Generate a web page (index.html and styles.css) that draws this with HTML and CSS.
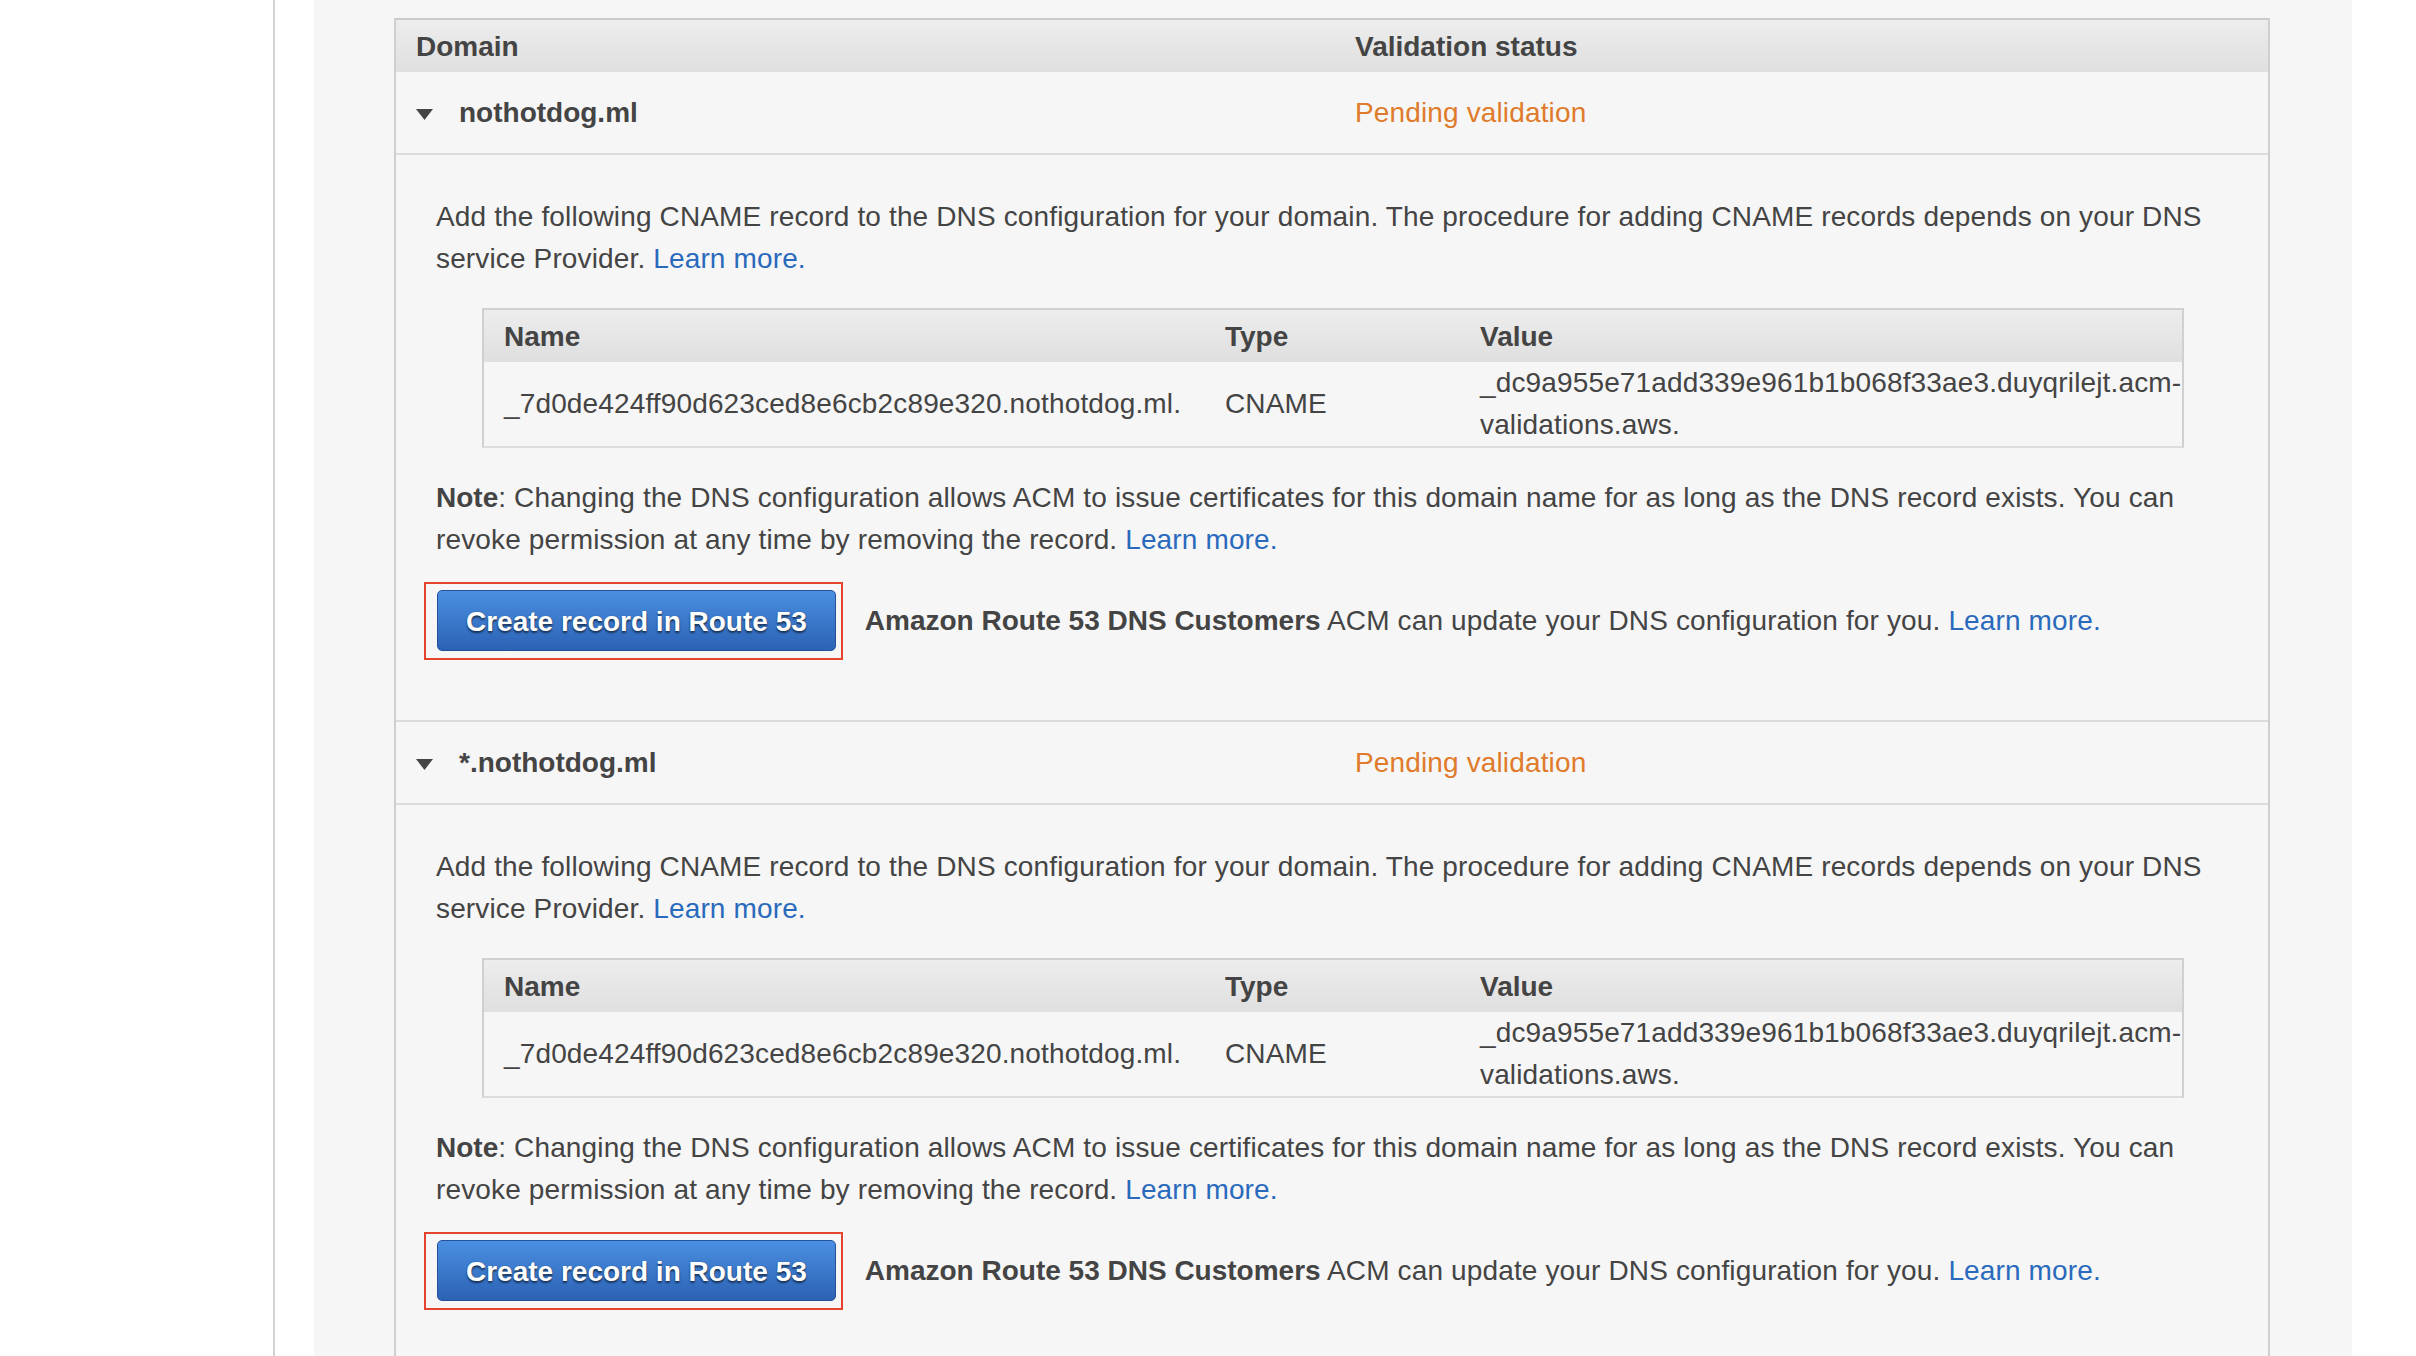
FILE: index.html
```html
<!DOCTYPE html>
<html lang="en">
<head>
<meta charset="utf-8">
<title>Validation</title>
<link rel="stylesheet" href="styles.css">
</head>
<body>
<div class="page">
  <aside class="sidebar"></aside>
  <div class="gutter"></div>
  <main class="panel">
    <div class="domains">
      <div class="domains-head">
        <div class="cell">Domain</div>
        <div class="cell">Validation status</div>
      </div>

      <section class="domain">
        <div class="domain-row">
          <div class="cell name"><svg class="caret" viewBox="0 0 17 11" width="17" height="11"><polygon points="0,0 17,0 8.5,11" fill="#444"/></svg>nothotdog.ml</div>
          <div class="cell status">Pending validation</div>
        </div>
        <div class="domain-detail">
          <p>Add the following CNAME record to the DNS configuration for your domain. The procedure for adding CNAME records depends on your DNS service Provider. <a href="#">Learn more.</a></p>
          <div class="records">
            <table>
              <colgroup><col class="c-name"><col class="c-type"><col class="c-value"></colgroup>
              <thead><tr><th>Name</th><th>Type</th><th>Value</th></tr></thead>
              <tbody><tr><td>_7d0de424ff90d623ced8e6cb2c89e320.nothotdog.ml.</td><td>CNAME</td><td class="value">_dc9a955e71add339e961b1b068f33ae3.duyqrilejt.acm-validations.aws.</td></tr></tbody>
            </table>
          </div>
          <p class="note"><b>Note</b>: Changing the DNS configuration allows ACM to issue certificates for this domain name for as long as the DNS record exists. You can revoke permission at any time by removing the record. <a href="#">Learn more.</a></p>
          <div class="action">
            <span class="mark"><button class="btn" type="button">Create record in Route 53</button></span>
            <span><b>Amazon Route 53 DNS Customers</b> ACM can update your DNS configuration for you. <a href="#">Learn more.</a></span>
          </div>
        </div>
      </section>

      <section class="domain">
        <div class="domain-row">
          <div class="cell name"><svg class="caret" viewBox="0 0 17 11" width="17" height="11"><polygon points="0,0 17,0 8.5,11" fill="#444"/></svg>*.nothotdog.ml</div>
          <div class="cell status">Pending validation</div>
        </div>
        <div class="domain-detail">
          <p>Add the following CNAME record to the DNS configuration for your domain. The procedure for adding CNAME records depends on your DNS service Provider. <a href="#">Learn more.</a></p>
          <div class="records">
            <table>
              <colgroup><col class="c-name"><col class="c-type"><col class="c-value"></colgroup>
              <thead><tr><th>Name</th><th>Type</th><th>Value</th></tr></thead>
              <tbody><tr><td>_7d0de424ff90d623ced8e6cb2c89e320.nothotdog.ml.</td><td>CNAME</td><td class="value">_dc9a955e71add339e961b1b068f33ae3.duyqrilejt.acm-validations.aws.</td></tr></tbody>
            </table>
          </div>
          <p class="note"><b>Note</b>: Changing the DNS configuration allows ACM to issue certificates for this domain name for as long as the DNS record exists. You can revoke permission at any time by removing the record. <a href="#">Learn more.</a></p>
          <div class="action">
            <span class="mark"><button class="btn" type="button">Create record in Route 53</button></span>
            <span><b>Amazon Route 53 DNS Customers</b> ACM can update your DNS configuration for you. <a href="#">Learn more.</a></span>
          </div>
        </div>
      </section>
    </div>
  </main>
</div>
</body>
</html>
```

FILE: styles.css
```css
html, body {
  margin: 0;
  height: 100%;
  overflow: hidden;
}
body {
  font-family: "Liberation Sans", Arial, Helvetica, sans-serif;
  font-size: 28px;
  line-height: 42px;
  letter-spacing: 0.14px;
  color: #444;
  background: #fff;
}
.page {
  display: flex;
  height: 100%;
}
.sidebar {
  flex: none;
  width: 273px;
  border-right: 2px solid #d2d2d2;
}
.gutter {
  flex: none;
  width: 39px;
}
.panel {
  flex: none;
  width: 2038px;
  box-sizing: border-box;
  background: #f6f6f6;
  padding: 18px 82px 0 80px;
}
.domains {
  border-left: 2px solid #cfcfcf;
  border-right: 2px solid #cfcfcf;
}
.domains-head,
.domain-row {
  display: grid;
  grid-template-columns: 939px 1fr;
}
.domains-head {
  border-top: 2px solid #cacaca;
  background: linear-gradient(#ededed, #dfdfdf);
  font-weight: bold;
  letter-spacing: 0;
}
.domains-head .cell {
  padding: 6px 20px 4px;
}
.domain-row {
  border-bottom: 2px solid #dcdcdc;
}
.domain-row .cell {
  padding: 20px 20px 19px;
}
.name {
  display: flex;
  align-items: center;
  font-weight: bold;
  letter-spacing: 0;
}
.caret {
  flex: none;
  margin-right: 26px;
  margin-top: 2px;
}
.status {
  color: #df7b2b;
}
.domain-detail {
  padding: 41px 40px 60px;
  border-bottom: 2px solid #dcdcdc;
}
p {
  margin: 0 0 28px;
}
p.note {
  margin-bottom: 21px;
}
b {
  letter-spacing: 0;
}
a {
  color: #2a6abd;
  text-decoration: none;
}
.records {
  margin: 0 44px 29px 46px;
  border: 2px solid #d0d0d0;
  border-bottom-color: #dddddd;
}
table {
  width: 100%;
  border-collapse: collapse;
  table-layout: fixed;
}
col.c-name { width: 721px; }
col.c-type { width: 255px; }
th {
  text-align: left;
  font-weight: bold;
  letter-spacing: 0;
  padding: 6px 20px 4px;
  background: linear-gradient(#ededed, #dfdfdf);
}
td {
  padding: 0 20px;
  vertical-align: middle;
  white-space: nowrap;
}
td.value {
  white-space: normal;
  padding-right: 0;
}
.action {
  display: flex;
  align-items: center;
}
.mark {
  flex: none;
  display: block;
  border: 2px solid #e5432d;
  padding: 6px 5px 7px 11px;
  margin-left: -12px;
  margin-right: 22px;
}
.btn {
  display: block;
  margin: 0;
  font-family: "Liberation Sans", Arial, Helvetica, sans-serif;
  font-size: 28px;
  line-height: 42px;
  font-weight: bold;
  letter-spacing: 0;
  color: #fff;
  padding: 10px 28px 7px;
  border: 1px solid #22509a;
  border-radius: 5px;
  background: linear-gradient(#4a8fe2, #2c62b4);
  text-shadow: 0 2px 2px rgba(0, 0, 0, 0.55), 0 0 1px rgba(0, 0, 0, 0.4);
  cursor: pointer;
}
```
